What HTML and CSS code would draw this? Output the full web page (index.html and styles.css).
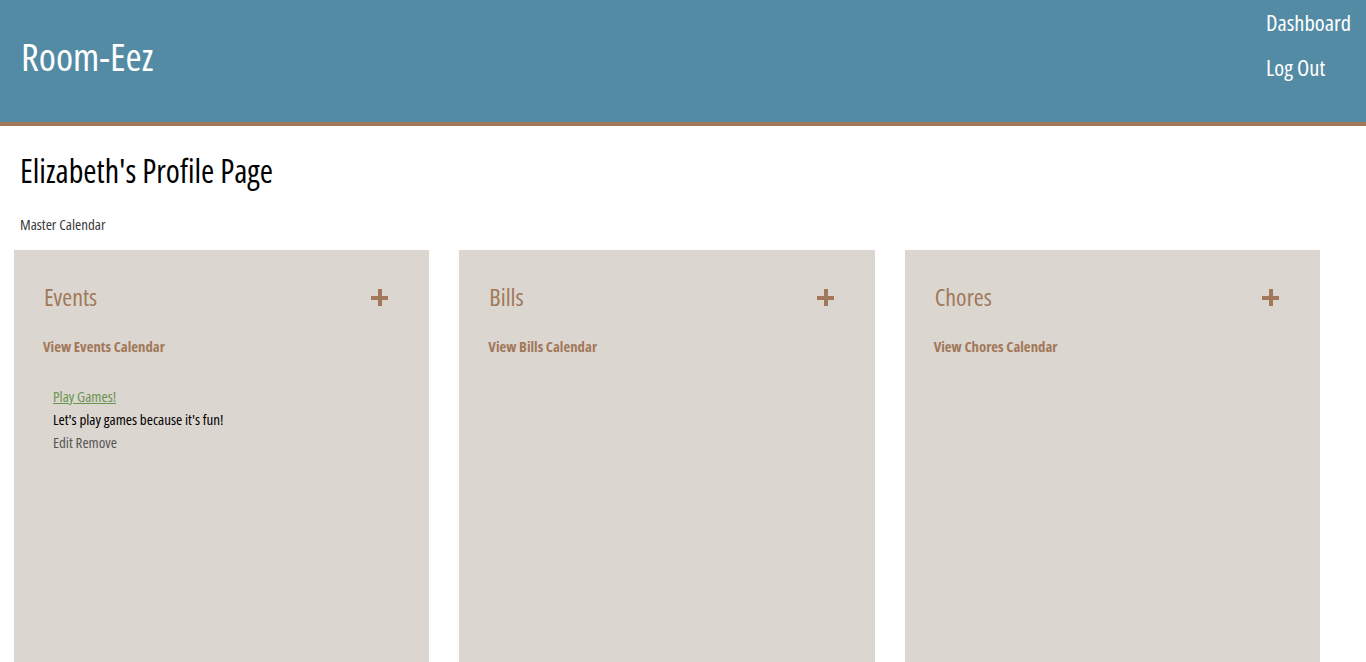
FILE: index.html
```html
<!DOCTYPE html>
<html>
<head>
<meta charset="utf-8">
<link rel="stylesheet" href="styles.css">
</head>
<body>
<header class="topbar">
  <div class="brand">Room-Eez</div>
  <nav class="nav">
    <a href="#">Dashboard</a>
    <a href="#">Log Out</a>
  </nav>
</header>
<main class="page">
  <h1 class="page-title">Elizabeth's Profile Page</h1>
  <a class="master" href="#">Master Calendar</a>
  <div class="cards">
    <section class="card">
      <div class="card-head"><h2>Events</h2><span class="plus"></span></div>
      <a class="cal-link" href="#">View Events Calendar</a>
      <div class="item">
        <a class="item-title" href="#">Play Games!</a>
        <div class="item-desc">Let's play games because it's fun!</div>
        <div class="item-actions"><a href="#">Edit</a> <a href="#">Remove</a></div>
      </div>
    </section>
    <section class="card">
      <div class="card-head"><h2>Bills</h2><span class="plus"></span></div>
      <a class="cal-link" href="#">View Bills Calendar</a>
    </section>
    <section class="card">
      <div class="card-head"><h2>Chores</h2><span class="plus"></span></div>
      <a class="cal-link" href="#">View Chores Calendar</a>
    </section>
  </div>
</main>
</body>
</html>
```
FILE: styles.css
```css
* { box-sizing: border-box; }
html, body { margin: 0; padding: 0; }
body {
  font-family: "Open Sans", "Liberation Sans", sans-serif;
  font-stretch: 75%;
  background: #fff;
  overflow: hidden;
  height: 662px;
}
a { text-decoration: none; color: inherit; }
.topbar {
  height: 126px;
  background: #548ba4;
  border-bottom: 4px solid #a2785a;
  display: flex;
  justify-content: space-between;
  padding: 0 15px 0 21px;
}
.brand {
  color: #fff;
  font-size: 39px;
  line-height: 1;
  margin-top: 36px;
}
.nav {
  display: flex;
  flex-direction: column;
  width: 85px;
}
.nav a {
  color: #fff;
  font-size: 22.5px;
  line-height: 45px;
  height: 45px;
}
.page { padding: 0 0 0 14px; }
.page-title {
  font-weight: 400;
  font-size: 32px;
  margin: 0;
  padding: 25px 0 0 6px;
  line-height: 40px;
  color: #000;
}
.master {
  display: block;
  font-size: 15px;
  color: #3a3a3a;
  margin: 24px 0 0 6px;
  line-height: 18px;
}
.cards {
  display: flex;
  gap: 30px;
  margin-top: 17px;
}
.card {
  width: 415.33px;
  flex: none;
  height: 420px;
  background: #dbd6cf;
  padding: 32px 29px 0 30px;
}
.card-head {
  display: flex;
  justify-content: space-between;
  align-items: center;
  height: 30px;
}
.card-head h2 {
  margin: 0;
  font-weight: 400;
  font-size: 24px;
  color: #a2785a;
  line-height: 30px;
}
.plus {
  width: 17px;
  height: 17px;
  margin-right: 12px;
  position: relative;
}
.plus::before, .plus::after {
  content: "";
  position: absolute;
  background: #a2785a;
}
.plus::before { left: 0; right: 0; top: 7px; height: 4px; }
.plus::after { top: 0; bottom: 0; left: 7px; width: 4px; }
.cal-link {
  display: block;
  margin-top: 24px;
  font-size: 14.8px;
  font-weight: 700;
  color: #a2785a;
  line-height: 20px;
  margin-left: -1px;
}
.item {
  padding: 29px 0 0 9px;
  font-size: 15px;
  line-height: 23px;
}
.item-title { color: #6a9452; text-decoration: underline; }
.item-desc { color: #000; }
.item-actions { color: #555; }
```
